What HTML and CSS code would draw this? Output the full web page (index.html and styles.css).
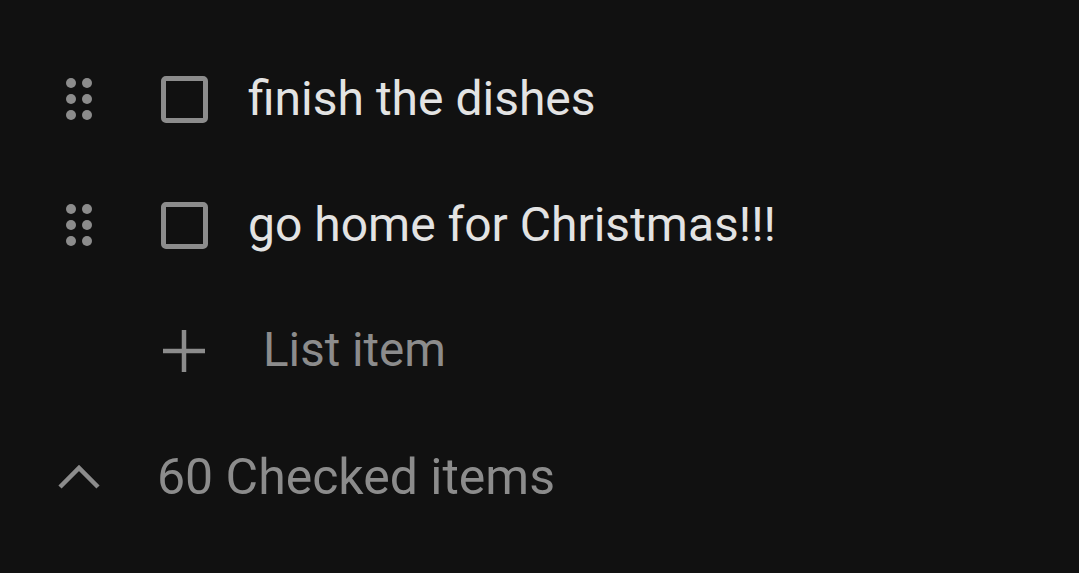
FILE: index.html
```html
<!DOCTYPE html>
<html lang="en">
<head>
    <meta charset="UTF-8">
    <meta name="viewport" content="width=device-width, initial-scale=1.0">
    <title>List</title>
    <link rel="stylesheet" href="styles.css">
</head>
<body>
    <div class="list">
        <div class="row">
            <span class="slot handle">
                <svg width="26" height="42" viewBox="0 0 26 42">
                    <circle cx="5" cy="5" r="5"/><circle cx="21" cy="5" r="5"/>
                    <circle cx="5" cy="21" r="5"/><circle cx="21" cy="21" r="5"/>
                    <circle cx="5" cy="37" r="5"/><circle cx="21" cy="37" r="5"/>
                </svg>
            </span>
            <span class="box-slot"><span class="checkbox"></span></span>
            <span class="text">finish the dishes</span>
        </div>

        <div class="row">
            <span class="slot handle">
                <svg width="26" height="42" viewBox="0 0 26 42">
                    <circle cx="5" cy="5" r="5"/><circle cx="21" cy="5" r="5"/>
                    <circle cx="5" cy="21" r="5"/><circle cx="21" cy="21" r="5"/>
                    <circle cx="5" cy="37" r="5"/><circle cx="21" cy="37" r="5"/>
                </svg>
            </span>
            <span class="box-slot"><span class="checkbox"></span></span>
            <span class="text">go home for Christmas!!!</span>
        </div>

        <div class="row">
            <span class="slot"></span>
            <span class="box-slot">
                <svg width="42" height="42" viewBox="0 0 42 42" class="plus">
                    <path d="M0 21H42M21 0V42"/>
                </svg>
            </span>
            <span class="text muted add">List item</span>
        </div>

        <div class="row">
            <span class="slot">
                <svg width="42" height="26" viewBox="0 0 42 26" class="chevron">
                    <path d="M2 23L21 4L40 23"/>
                </svg>
            </span>
            <span class="text muted checked">60 Checked items</span>
        </div>
    </div>
</body>
</html>
```

FILE: styles.css
```css
body {
    margin: 0;
    background-color: #111111;
    font-family: Roboto, "Liberation Sans", sans-serif;
    color: #e3e3e3;
}
.list {
    padding: 36px 0 0 54px;
}
.row {
    display: flex;
    align-items: center;
    height: 126px;
}
.slot {
    width: 50px;
    display: flex;
    justify-content: center;
    align-items: center;
}
.handle svg {
    fill: #8c8c8c;
}
.box-slot {
    width: 56px;
    margin-left: 52px;
    display: flex;
    justify-content: center;
    align-items: center;
}
.checkbox {
    width: 37px;
    height: 37px;
    border: 5px solid #8c8c8c;
    border-radius: 5px;
}
.plus, .chevron {
    fill: none;
    stroke: #8c8c8c;
    stroke-width: 4.5;
}
.text {
    font-size: 48px;
    line-height: 1;
    margin-left: 36px;
}
.muted {
    color: #8c8c8c;
}
.add {
    font-size: 47.5px;
    margin-left: 51px;
}
.checked {
    font-size: 50px;
    margin-left: 53px;
}
```
